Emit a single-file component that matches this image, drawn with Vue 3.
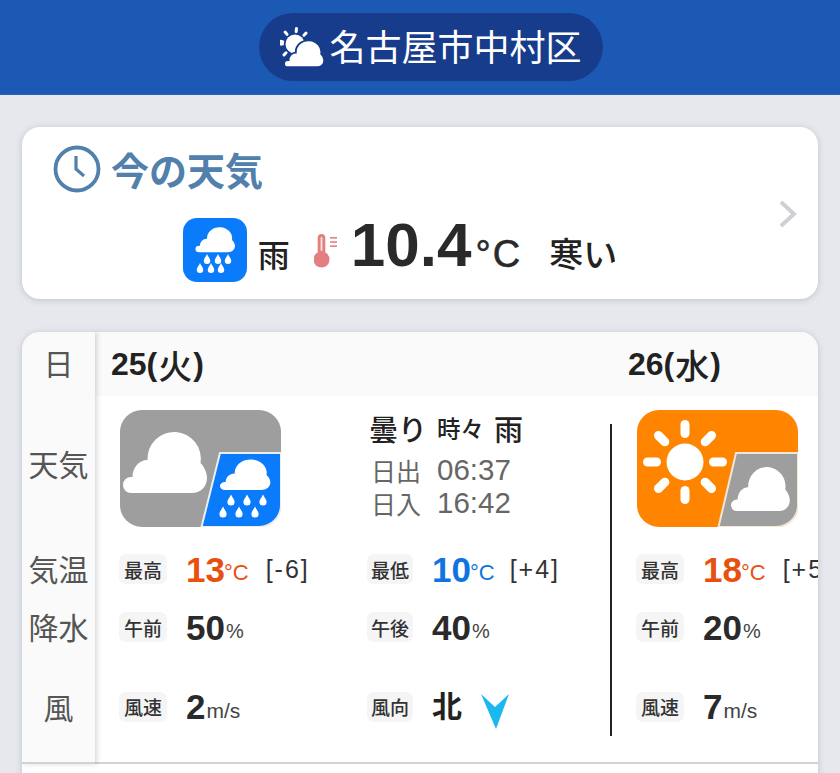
<script setup>
const cloud =
  "M8 64 a8 8 0 0 1 0 -16 h1.5 c0 -9 6 -17 15 -17 A26.7 26.7 0 1 1 77.5 34 C81.5 38 84 44 84 49 C84 58 77 64 69 64 Z";
const drop =
  "M0 -5.5 C1.2 -2.5 3.6 -0.5 3.6 2 A3.6 3.6 0 0 1 -3.6 2 C-3.6 -0.5 -1.2 -2.5 0 -5.5 Z";

const sideLabels = ["日", "天気", "気温", "降水", "風"];
const smallDrops = [
  [111, 90],
  [127, 90],
  [143, 90],
  [103, 102],
  [119, 102],
  [135, 102],
];
const nowDrops = [
  [24, 41],
  [35, 41],
  [45, 41],
  [17, 50],
  [28, 50],
  [38, 50],
];
const rays = [0, 45, 90, 135, 180, 225, 270, 315];
const headRays = [-80, -40, 5, 45, 270, 225];

const days = [
  {
    label: "25",
    week: "火",
    icon: "rain",
    rows: [
      [
        { tag: "最高", value: "13", unit: "°C", tone: "hot", note: "[-6]" },
        { tag: "最低", value: "10", unit: "°C", tone: "cold", note: "[+4]" },
      ],
      [
        { tag: "午前", value: "50", unit: "%" },
        { tag: "午後", value: "40", unit: "%" },
      ],
      [
        { tag: "風速", value: "2", unit: "m/s" },
        { tag: "風向", dir: "北" },
      ],
    ],
  },
  {
    label: "26",
    week: "水",
    icon: "sun",
    rows: [
      [{ tag: "最高", value: "18", unit: "°C", tone: "hot", note: "[+5]" }],
      [{ tag: "午前", value: "20", unit: "%" }],
      [{ tag: "風速", value: "7", unit: "m/s" }],
    ],
  },
];
</script>

<template>
  <div class="page">
    <header class="topbar">
      <div class="place">
        <svg class="place-icon" width="46" height="42" viewBox="0 0 46 42">
          <circle cx="15" cy="18" r="9.5" fill="#fff" />
          <rect
            v-for="r in headRays"
            :key="r"
            x="13.6"
            y="1"
            width="3"
            height="6"
            rx="1.5"
            fill="#fff"
            :transform="`rotate(${r} 15 18)`"
          />
          <path
            :d="cloud"
            fill="#fff"
            stroke="#173c8c"
            stroke-width="4"
            transform="translate(4 13) scale(.48 .44)"
          />
        </svg>
        <span class="place-name">名古屋市中村区</span>
      </div>
    </header>

    <section class="card now">
      <div class="now-main">
        <div class="now-title">
          <svg width="48" height="48" viewBox="0 0 48 48" fill="none" stroke="#5080ab">
            <circle cx="24" cy="24" r="21.5" stroke-width="3.8" />
            <path d="M23 11 V24 L31 31" stroke-width="3.2" />
          </svg>
          <span>今の天気</span>
        </div>
        <div class="now-row">
          <svg width="64" height="64" viewBox="0 0 64 64">
            <rect width="64" height="64" rx="14" fill="#0a7bfb" />
            <path :d="cloud" fill="#fff" transform="translate(12.5 8) scale(.47 .41)" />
            <path
              v-for="d in nowDrops"
              :key="d.join()"
              :d="drop"
              fill="#fff"
              :transform="`translate(${d[0]} ${d[1]}) scale(.9)`"
            />
          </svg>
          <span class="now-text">雨</span>
          <svg class="thermo" width="24" height="34" viewBox="0 0 24 34" fill="#e37f82">
            <rect x="3.7" y="0" width="7.6" height="24" rx="3.8" />
            <rect x="6.6" y="3" width="1.8" height="14" rx="0.9" fill="#fbe4e4" />
            <circle cx="7.5" cy="25.5" r="8" />
            <rect x="16" y="3" width="7" height="1.6" />
            <rect x="16" y="7.2" width="7" height="1.6" />
            <rect x="16" y="11.4" width="7" height="1.6" />
          </svg>
          <span class="now-temp">10.4</span>
          <span class="now-unit">°C</span>
          <span class="now-feel">寒い</span>
        </div>
      </div>
      <svg class="chevron" width="18" height="28" viewBox="0 0 18 28" fill="none">
        <path d="M2 2 L15 14 L2 26" stroke="#cfcfd6" stroke-width="4" />
      </svg>
    </section>

    <section class="card table">
      <div class="side">
        <div v-for="s in sideLabels" :key="s" class="side-cell">{{ s }}</div>
      </div>
      <div class="days">
        <article v-for="day in days" :key="day.label" class="day">
          <div class="day-head">{{ day.label }}(<span>{{ day.week }}</span>)</div>
          <div class="day-weather">
            <svg width="161" height="117" viewBox="0 0 161 117">
              <template v-if="day.icon === 'rain'">
                <rect width="161" height="117" rx="22" fill="#9e9e9e" />
                <path :d="cloud" fill="#fff" transform="translate(3 19)" />
                <path
                  d="M100 43 H161 V95 A22 22 0 0 1 139 117 H81.5 Z"
                  fill="#0a7bfb"
                  stroke="#eee"
                  stroke-width="2"
                />
                <path :d="cloud" fill="#fff" transform="translate(100 48) scale(.6 .5)" />
                <path
                  v-for="d in smallDrops"
                  :key="d.join()"
                  :d="drop"
                  fill="#fff"
                  :transform="`translate(${d[0]} ${d[1]})`"
                />
              </template>
              <template v-else>
                <rect width="161" height="117" rx="22" fill="#ff8400" />
                <circle cx="48" cy="52" r="18.5" fill="#fff" />
                <rect
                  v-for="r in rays"
                  :key="r"
                  x="43.5"
                  y="10"
                  width="9"
                  height="18"
                  rx="4.5"
                  fill="#fff"
                  :transform="`rotate(${r} 48 52)`"
                />
                <path
                  d="M99 43 H161 V95 A22 22 0 0 1 139 117 H81.5 Z"
                  fill="#9e9e9e"
                  stroke="#f2e6d8"
                  stroke-width="2"
                />
                <path :d="cloud" fill="#fff" transform="translate(94 55) scale(.7 .72)" />
              </template>
            </svg>
            <div v-if="day.icon === 'rain'" class="info">
              <div class="forecast">
                <span class="big">曇り</span>
                <span class="mid">時々</span>
                <span class="big">雨</span>
              </div>
              <div class="sun-line">日出<span>06:37</span></div>
              <div class="sun-line">日入<span>16:42</span></div>
            </div>
          </div>
          <div v-for="(row, i) in day.rows" :key="i" class="row" :class="`row-${i}`">
            <div v-for="cell in row" :key="cell.tag" class="cell">
              <span class="tag">{{ cell.tag }}</span>
              <template v-if="cell.dir">
                <span class="dir">{{ cell.dir }}</span>
                <svg class="arrow" width="28" height="35" viewBox="0 0 28 35">
                  <path d="M0 0 L14 13 L28 0 L15 35 Z" fill="#1bb8f0" />
                </svg>
              </template>
              <template v-else>
                <span class="value" :class="cell.tone">{{ cell.value }}</span>
                <span class="unit" :class="[cell.tone, { deg: cell.unit === '°C', speed: cell.unit === 'm/s' }]">{{ cell.unit }}</span>
                <span v-if="cell.note" class="note">{{ cell.note }}</span>
              </template>
            </div>
          </div>
        </article>
      </div>
    </section>
  </div>
</template>

<style>
html,
body {
  margin: 0;
  overflow: hidden;
  background: #e6e8ee;
}
</style>

<style scoped>
.page {
  height: 773px;
  overflow: hidden;
  background: #e6e8ee;
  color: #2a2a2a;
  font-family: "Liberation Sans", "Noto Sans CJK JP", sans-serif;
}

.topbar {
  height: 95px;
  box-sizing: border-box;
  padding: 13px 0 0 22px;
  display: flex;
  justify-content: center;
  align-items: flex-start;
  background: #1b59b5;
  border-bottom: 1px solid #2a62b8;
}

.place {
  width: 344px;
  height: 68px;
  display: flex;
  justify-content: center;
  align-items: center;
  gap: 3px;
  border-radius: 34px;
  background: #173c8c;
  color: #fff;
}

.place-name {
  padding-top: 3px;
  font-size: 36px;
  line-height: 1;
}

.card {
  margin: 0 22px;
  background: #fff;
  border-radius: 18px;
  box-shadow: 0 1px 6px rgba(60, 60, 80, 0.22);
}

.now {
  margin-top: 32px;
  height: 172px;
  box-sizing: border-box;
  padding: 19px 21px 17px 31px;
  display: flex;
  align-items: center;
}

.now-main {
  width: 695px;
}

.chevron {
  margin-left: 32px;
}

.now-title {
  height: 46px;
  display: flex;
  align-items: center;
  gap: 10px;
  color: #5080ab;
  font-size: 38px;
  font-weight: 700;
  line-height: 1;
}

.now-title span {
  padding-top: 5px;
}

.now-row {
  margin-top: 26px;
  height: 64px;
  display: flex;
  justify-content: center;
  align-items: flex-end;
}

.now-row > svg:first-child {
  align-self: flex-start;
}

.now-text {
  margin-left: 11px;
  margin-bottom: 10px;
  font-size: 32px;
  font-weight: 500;
  line-height: 1;
  color: #222;
}

.thermo {
  margin-left: 24px;
  margin-bottom: 14px;
}

.now-temp {
  margin-left: 13px;
  margin-bottom: 6px;
  font-size: 62px;
  font-weight: 700;
  line-height: 1;
}

.now-unit {
  margin-left: 4px;
  margin-bottom: 9px;
  font-size: 38px;
  letter-spacing: 2px;
  -webkit-text-stroke: 0.6px #2a2a2a;
  line-height: 1;
}

.now-feel {
  margin-left: 27px;
  margin-bottom: 10px;
  font-size: 34px;
  font-weight: 500;
  line-height: 1;
  color: #222;
}

.table {
  margin-top: 33px;
  padding-bottom: 40px;
  display: flex;
  overflow: hidden;
  position: relative;
}

.side {
  flex: none;
  width: 73px;
  height: 430px;
  background: #fafafa;
  box-shadow: 2px 0 5px rgba(0, 0, 0, 0.16);
  position: relative;
  z-index: 1;
  display: grid;
  grid-template-rows: 64px 139px 68px 48px 111px;
  border-bottom: 2px solid #d2d2d2;
}

.side-cell {
  display: flex;
  justify-content: center;
  align-items: center;
  padding-bottom: 2px;
  font-size: 30px;
  color: #555;
}

.side-cell:nth-child(1) {
  padding-bottom: 4px;
}

.side-cell:nth-child(2) {
  padding-bottom: 5px;
}

.days {
  flex: 1;
  min-width: 0;
  height: 430px;
  display: flex;
  overflow: hidden;
  border-bottom: 2px solid #d2d2d2;
}

.day {
  flex: none;
  width: 517px;
  position: relative;
}

.day:first-child::after {
  content: "";
  position: absolute;
  left: 515px;
  top: 92px;
  width: 2px;
  height: 312px;
  background: #222;
}

.day-head {
  height: 64px;
  box-sizing: border-box;
  padding-left: 16px;
  display: flex;
  align-items: center;
  background: #fafafa;
  font-size: 32px;
  font-weight: 700;
  color: #222;
}

.day-head span {
  margin: 0 1px;
  font-size: 34px;
  font-weight: 500;
}

.day-weather {
  height: 139px;
  box-sizing: border-box;
  padding: 14px 0 0 25px;
  display: flex;
  align-items: flex-start;
}

.info {
  margin-left: 88px;
}

.forecast {
  height: 36px;
  display: flex;
  align-items: center;
  gap: 10px;
  color: #222;
  font-weight: 500;
}

.big {
  font-size: 29px;
}

.mid {
  font-size: 23.5px;
}

.sun-line {
  margin-left: 2px;
  height: 33px;
  display: flex;
  align-items: center;
  font-size: 25px;
  color: #666;
}

.forecast + .sun-line {
  margin-top: 7px;
}

.sun-line span {
  margin-left: 16px;
  font-size: 29.5px;
}

.row {
  display: grid;
  grid-template-columns: 248px 248px;
  padding-left: 24px;
  align-items: center;
}

.row-0 {
  height: 68px;
}

.row-1 {
  height: 48px;
}

.row-2 {
  height: 111px;
}

.cell {
  display: flex;
  align-items: center;
  white-space: nowrap;
}

.tag {
  flex: none;
  width: 48px;
  height: 30px;
  display: flex;
  justify-content: center;
  align-items: center;
  border-radius: 7px;
  background: #f5f5f5;
  font-size: 19px;
  font-weight: 500;
  color: #333;
}

.cell:nth-child(2) .tag {
  width: 46px;
}

.value {
  margin-left: 19px;
  font-size: 35px;
  font-weight: 700;
  line-height: 1;
}

.unit {
  margin-top: 8px;
  margin-left: 1px;
  font-size: 20px;
  color: #444;
}

.unit.deg {
  margin-left: -1px;
  font-size: 22px;
}

.unit.speed {
  font-size: 21px;
}

.unit.hot {
  color: #e8500f;
}

.unit.cold {
  color: #0f74e0;
}

.hot {
  color: #e8500f;
}

.cold {
  color: #0f74e0;
}

.note {
  margin-left: 17px;
  font-size: 25px;
  letter-spacing: 2px;
  color: #333;
}

.cell:nth-child(2) .note {
  margin-left: 15px;
}

.dir {
  margin-left: 19px;
  font-size: 30px;
  font-weight: 700;
  line-height: 1;
  color: #222;
}

.arrow {
  margin-left: 19px;
  margin-top: 10px;
}
</style>
